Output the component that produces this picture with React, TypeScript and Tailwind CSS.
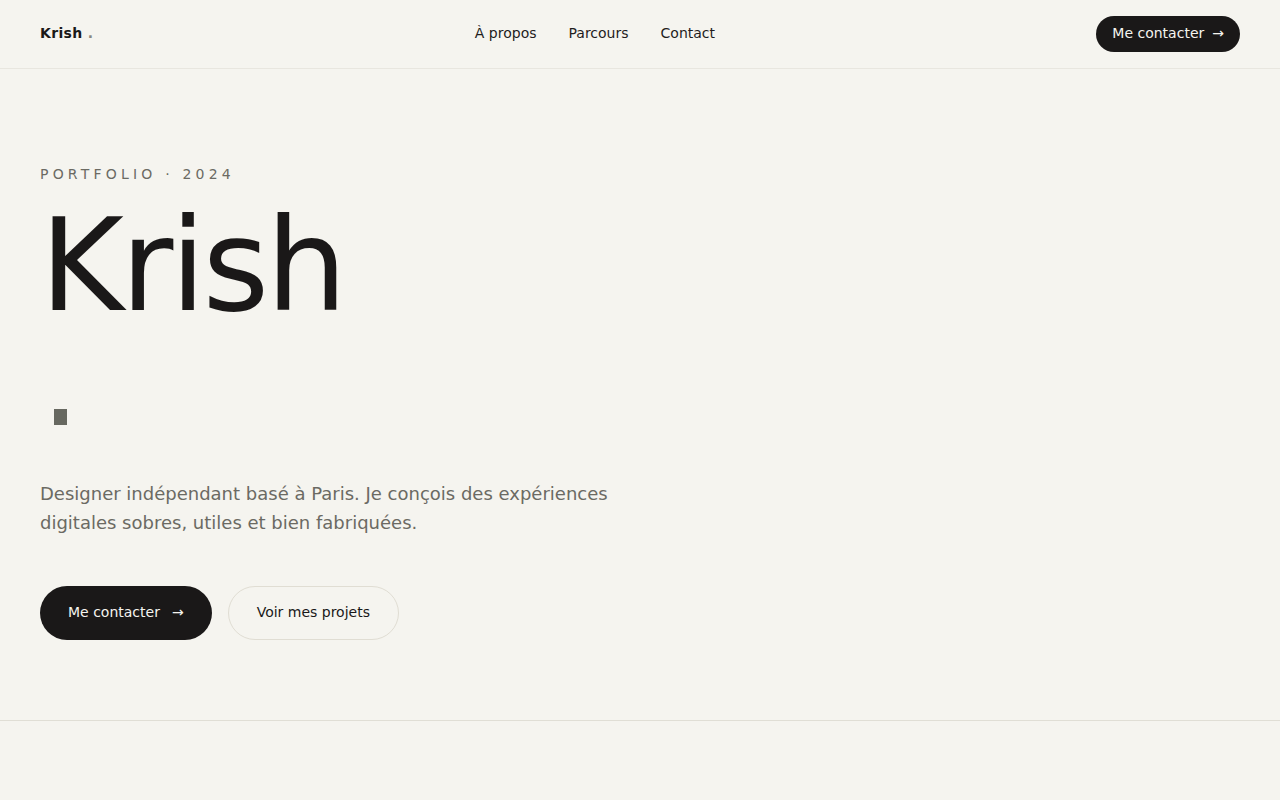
import React from "react";

export default function App() {
  return (
    <div
      className="min-h-screen bg-[#f5f4ef] text-[#1a1818]"
      style={{ fontFamily: '"DejaVu Sans", "Liberation Sans", sans-serif' }}
    >
      <header className="h-[69px] border-b border-[#e8e6df] px-10 flex items-center justify-between">
        <div className="mb-[2px] text-sm font-bold tracking-wide">
          Krish <span className="text-[#8a8880]">.</span>
        </div>
        <nav className="mb-[2px] flex items-center gap-8 text-sm text-[#1f1d1d]">
          <a>À propos</a>
          <a>Parcours</a>
          <a>Contact</a>
        </nav>
        <button className="h-9 rounded-full bg-[#1a1818] px-4 pb-[3px] text-sm text-[#f5f4ef] flex items-center gap-2">
          Me contacter <span>→</span>
        </button>
      </header>

      <section className="px-10 pt-[95px] pb-20 border-b border-[#e0ded5]">
        <div className="text-sm leading-5 tracking-[0.3em] text-[#6b6a63]">PORTFOLIO · 2024</div>
        <h1 className="mt-[18px] text-[128px] leading-none tracking-tight font-normal">Krish</h1>
        <div className="mt-[79px] ml-[13.5px] w-[13.5px] h-4 bg-[#676860]" />
        <p className="mt-[54px] max-w-[600px] text-lg leading-[29px] text-[#6b6a63]">
          Designer indépendant basé à Paris. Je conçois des expériences digitales sobres, utiles et bien fabriquées.
        </p>
        <div className="mt-[49px] flex items-center gap-4">
          <button className="h-[54px] rounded-full bg-[#1a1818] px-7 pb-[3px] text-sm text-[#f5f4ef] flex items-center gap-3">
            Me contacter <span>→</span>
          </button>
          <button className="h-[54px] rounded-full border border-[#e0ddd3] px-7 pb-[3px] text-sm text-[#1a1818]">
            Voir mes projets
          </button>
        </div>
      </section>
      <div className="h-20" />
    </div>
  );
}
